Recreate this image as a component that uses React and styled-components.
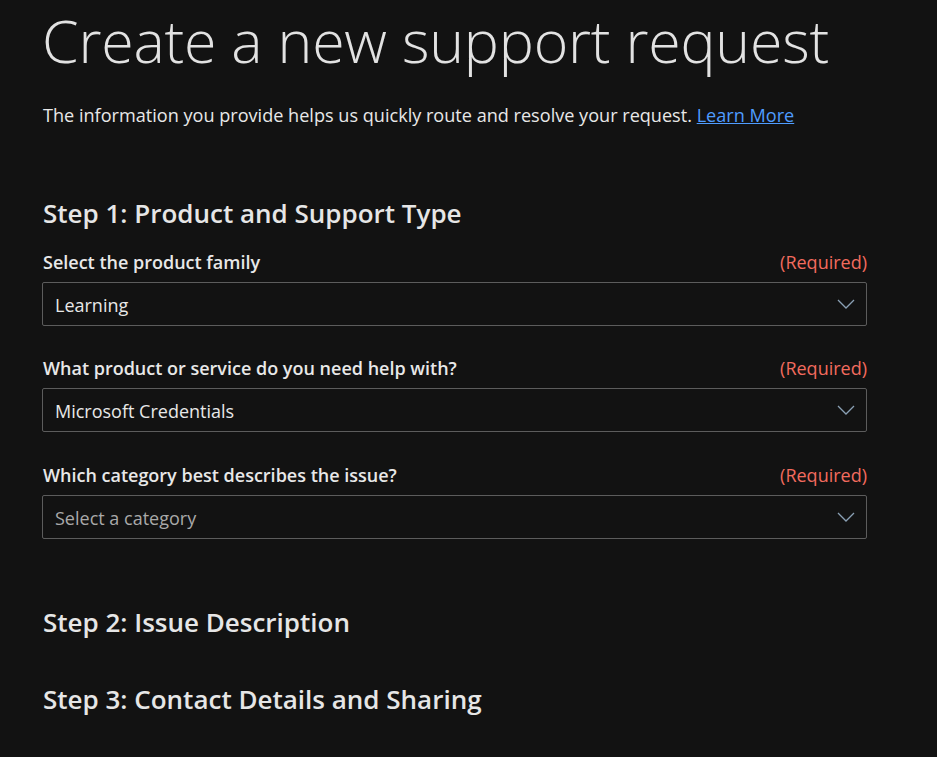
import styled, { createGlobalStyle } from "styled-components";

const GlobalStyle = createGlobalStyle`
	html, body {
		margin: 0;
		padding: 0;
		background: #121212;
	}
	body {
		font-family: "Open Sans", "Noto Sans", sans-serif;
		color: #e6e6e6;
	}
`;

const Page = styled.main`
	width: 825px;
	padding: 0 0 40px 42px;
`;

const Title = styled.h1`
	margin: 0;
	padding-top: 2px;
	font-size: 59px;
	font-weight: 300;
	line-height: 76px;
	letter-spacing: -0.2px;
	color: #e2e2e2;
`;

const Intro = styled.p`
	margin: 24px 0 0 1px;
	font-size: 18.1px;
	line-height: 26px;
	color: #e8e8e8;

	a {
		color: #4f9cff;
		text-decoration: underline;
	}
`;

const StepHeading = styled.h2`
	margin: ${(p) => p.$top}px 0 0 1px;
	font-size: 26px;
	font-weight: 600;
	line-height: 34px;
	color: #e6e6e6;
`;

const Field = styled.div`
	display: flex;
	flex-direction: column;
	margin-top: ${(p) => p.$top}px;
`;

const LabelRow = styled.div`
	display: flex;
	justify-content: space-between;
	align-items: center;
	padding-left: 1px;
	margin-bottom: 7px;
	height: 26px;
`;

const Label = styled.label`
	font-size: 18px;
	font-weight: 600;
	color: #e8e8e8;
`;

const Required = styled.span`
	font-size: 18px;
	color: #f26b5e;
`;

const Select = styled.div`
	display: flex;
	align-items: center;
	justify-content: space-between;
	padding: 0 11px 0 12px;
	border: 1px solid #5c5c5c;
	border-radius: 2px;
	box-sizing: border-box;
	height: 44px;
	font-size: 18px;
	color: ${(p) => (p.$placeholder ? "#a9a9a9" : "#e8e8e8")};

	span {
		padding-top: 2px;
	}
`;

const Chevron = () => (
	<svg width="18" height="10" viewBox="0 0 18 10" fill="none">
		<path d="M1 1l8 8 8-8" stroke="#8aa0b4" strokeWidth="1.3" />
	</svg>
);

const fields = [
	{ label: "Select the product family", value: "Learning", top: 19 },
	{ label: "What product or service do you need help with?", value: "Microsoft Credentials", top: 29 },
	{ label: "Which category best describes the issue?", value: "Select a category", placeholder: true, top: 30 },
];

export default function App() {
	return (
		<>
			<GlobalStyle />
			<Page>
				<Title>Create a new support request</Title>
				<Intro>
					The information you provide helps us quickly route and resolve your request.{" "}
					<a href="#">Learn More</a>
				</Intro>

				<StepHeading $top={68}>Step 1: Product and Support Type</StepHeading>
				{fields.map((f) => (
					<Field key={f.label} $top={f.top}>
						<LabelRow>
							<Label>{f.label}</Label>
							<Required>(Required)</Required>
						</LabelRow>
						<Select $placeholder={f.placeholder}>
							<span>{f.value}</span>
							<Chevron />
						</Select>
					</Field>
				))}

				<StepHeading $top={66}>Step 2: Issue Description</StepHeading>
				<StepHeading $top={43}>Step 3: Contact Details and Sharing</StepHeading>
			</Page>
		</>
	);
}
